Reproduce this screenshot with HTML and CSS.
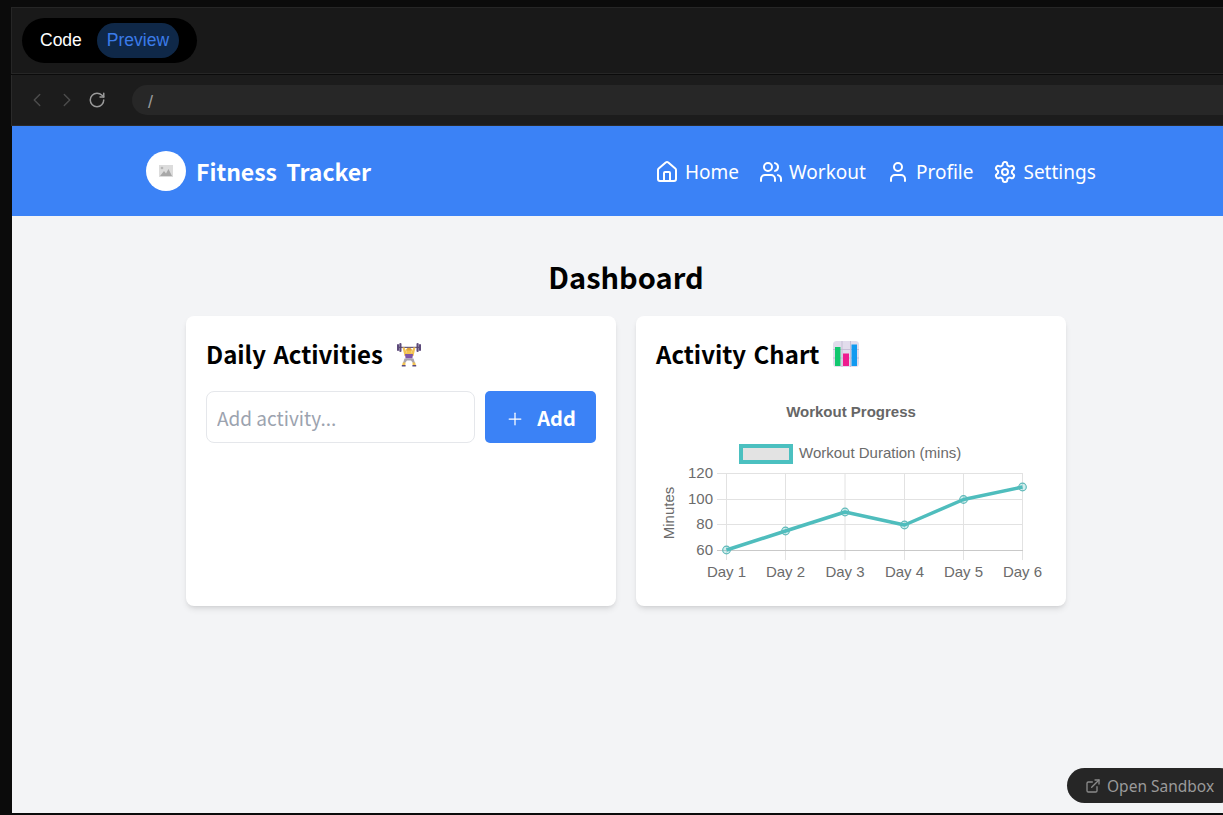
FILE: index.html
```html
<!DOCTYPE html>
<html lang="en">
<head>
<meta charset="utf-8">
<title>Fitness Tracker</title>
<link rel="stylesheet" href="styles.css">
</head>
<body>
<div class="frame">
  <div class="tabbar">
    <div class="toggle">
      <span class="toggle-item">Code</span>
      <span class="toggle-item active">Preview</span>
    </div>
  </div>
  <div class="addressbar">
    <div class="nav-buttons">
      <svg class="ctl dim" viewBox="0 0 24 24"><path d="m15 18-6-6 6-6"/></svg>
      <svg class="ctl dim" viewBox="0 0 24 24"><path d="m9 18 6-6-6-6"/></svg>
      <svg class="ctl reload" viewBox="0 0 24 24"><path d="M21 12a9 9 0 1 1-9-9c2.52 0 4.93 1 6.74 2.74L21 8"/><path d="M21 3v5h-5"/></svg>
    </div>
    <div class="url">/</div>
  </div>
  <div class="preview">
    <header class="site-header">
      <div class="brand">
        <div class="logo">
          <svg viewBox="0 0 14 14" class="logo-img"><rect x="0" y="1" width="14" height="12" fill="#dcdcdc"/><circle cx="3" cy="4" r="1.3" fill="#b5b5b5"/><path d="M1 12l4-5 2 2.5L9.500 5 13 12z" fill="#a8a8a8"/></svg>
        </div>
        <span class="brand-name">Fitness Tracker</span>
      </div>
      <nav class="site-nav">
        <a class="nav-link"><svg class="nav-icon" viewBox="0 0 24 24"><path d="M15 21v-8a1 1 0 0 0-1-1h-4a1 1 0 0 0-1 1v8"/><path d="M3 10a2 2 0 0 1 .709-1.528l7-5.999a2 2 0 0 1 2.582 0l7 5.999A2 2 0 0 1 21 10v9a2 2 0 0 1-2 2H5a2 2 0 0 1-2-2z"/></svg>Home</a>
        <a class="nav-link"><svg class="nav-icon" viewBox="0 0 24 24"><path d="M16 21v-2a4 4 0 0 0-4-4H6a4 4 0 0 0-4 4v2"/><circle cx="9" cy="7" r="4"/><path d="M22 21v-2a4 4 0 0 0-3-3.870"/><path d="M16 3.130a4 4 0 0 1 0 7.750"/></svg>Workout</a>
        <a class="nav-link"><svg class="nav-icon" viewBox="0 0 24 24"><path d="M19 21v-2a4 4 0 0 0-4-4H9a4 4 0 0 0-4 4v2"/><circle cx="12" cy="7" r="4"/></svg>Profile</a>
        <a class="nav-link"><svg class="nav-icon" viewBox="0 0 24 24"><path d="M12.220 2h-.44a2 2 0 0 0-2 2v.18a2 2 0 0 1-1 1.730l-.43.25a2 2 0 0 1-2 0l-.15-.08a2 2 0 0 0-2.730.730l-.22.38a2 2 0 0 0 .73 2.730l.15.1a2 2 0 0 1 1 1.720v.51a2 2 0 0 1-1 1.740l-.15.09a2 2 0 0 0-.73 2.730l.22.38a2 2 0 0 0 2.730.73l.15-.08a2 2 0 0 1 2 0l.43.25a2 2 0 0 1 1 1.730V20a2 2 0 0 0 2 2h.44a2 2 0 0 0 2-2v-.18a2 2 0 0 1 1-1.730l.43-.25a2 2 0 0 1 2 0l.15.08a2 2 0 0 0 2.730-.73l.22-.39a2 2 0 0 0-.73-2.730l-.15-.08a2 2 0 0 1-1-1.740v-.5a2 2 0 0 1 1-1.740l.15-.09a2 2 0 0 0 .73-2.730l-.22-.38a2 2 0 0 0-2.730-.73l-.15.08a2 2 0 0 1-2 0l-.43-.25a2 2 0 0 1-1-1.730V4a2 2 0 0 0-2-2z"/><circle cx="12" cy="12" r="3"/></svg>Settings</a>
      </nav>
    </header>
    <main class="content">
      <h1 class="page-title">Dashboard</h1>
      <div class="cards">
        <section class="card">
          <h2 class="card-title">Daily Activities
            <svg class="emoji lifter" viewBox="0 0 24 26">
              <rect x="0" y="3" width="2" height="7" rx="1" fill="#5c4a7a"/><rect x="22" y="3" width="2" height="7" rx="1" fill="#5c4a7a"/>
              <rect x="2.300" y="2" width="2.200" height="9" rx="1.100" fill="#5c4a7a"/><rect x="19.500" y="2" width="2.200" height="9" rx="1.100" fill="#5c4a7a"/>
              <rect x="2" y="5.800" width="20" height="1.100" fill="#57476f"/>
              <path d="M5.500 6.500l2-.2L9.800 12h4.400l2.300-5.700 2 .2L16.500 15h-9z" fill="#f2c252"/>
              <circle cx="12" cy="10" r="2.800" fill="#f2c252"/><path d="M9.200 9.500a2.800 2.800 0 0 1 5.600 0z" fill="#e0a33a"/>
              <path d="M8 13h8l-.6 4.500H8.600z" fill="#7f56a8"/>
              <path d="M7.500 17.500h9l1.500 4.500h-2l-2-2.500h-4L8 22H6z" fill="#a9a3ae"/>
              <path d="M5.800 21.500h2.800l-.3 2.500H5.200zM15.400 21.500h2.800l.6 2.500h-3.100z" fill="#f2c252"/>
              <path d="M4.800 24h3.800v1.400H4.800zM15.400 24h3.800v1.400h-3.800z" fill="#5c4a7a"/>
            </svg>
          </h2>
          <form class="add-form">
            <input class="add-input" type="text" placeholder="Add activity...">
            <button class="add-button" type="button"><svg class="plus" viewBox="0 0 24 24"><path d="M5 12h14"/><path d="M12 5v14"/></svg>Add</button>
          </form>
        </section>
        <section class="card">
          <h2 class="card-title">Activity Chart
            <svg class="emoji" viewBox="0 0 26 26">
              <rect x="0" y="0" width="26" height="26" rx="3.500" fill="#e2dcec"/>
              <path d="M0 8.500h26M0 17h26M9 0v26M17.500 0v26" stroke="#c6bed6" stroke-width="1"/>
              <rect x="2" y="6" width="5.500" height="19" fill="#12c76f"/>
              <rect x="10" y="12.500" width="6" height="12.500" fill="#ee1c8f"/>
              <rect x="18.500" y="3.500" width="5.500" height="21.500" fill="#129af0"/>
            </svg>
          </h2>
          <svg class="chart" viewBox="656 391 390 195">
            <text class="chart-title" x="851" y="417" text-anchor="middle">Workout Progress</text>
            <rect class="legend-box" x="741" y="446" width="50" height="16"/>
            <text class="chart-label" x="799" y="458">Workout Duration (mins)</text>
            <g class="grid">
              <path d="M717 473.500H1023M717 499.500H1023M717 524.500H1023"/>
              <path d="M726.500 473V560M785.500 473V560M845 473V560M904.500 473V560M963.500 473V560M1022.500 473V560"/>
              <path class="axis" d="M717 550.500H1023"/>
            </g>
            <g class="chart-label" text-anchor="end">
              <text x="713" y="478">120</text>
              <text x="713" y="504">100</text>
              <text x="713" y="529">80</text>
              <text x="713" y="555">60</text>
            </g>
            <g class="chart-label" text-anchor="middle">
              <text x="726.500" y="577">Day 1</text>
              <text x="785.500" y="577">Day 2</text>
              <text x="845" y="577">Day 3</text>
              <text x="904.500" y="577">Day 4</text>
              <text x="963.500" y="577">Day 5</text>
              <text x="1022.500" y="577">Day 6</text>
            </g>
            <text class="chart-label" transform="translate(674 513) rotate(-90)" text-anchor="middle">Minutes</text>
            <polyline class="series" points="726.500,550 785.500,531 845,512 904.500,525 963.500,499.500 1022.500,487"/>
            <g class="points">
              <circle cx="726.500" cy="550" r="3.800"/><circle cx="785.500" cy="531" r="3.800"/><circle cx="845" cy="512" r="3.800"/><circle cx="904.500" cy="525" r="3.800"/><circle cx="963.500" cy="499.500" r="3.800"/><circle cx="1022.500" cy="487" r="3.800"/>
            </g>
          </svg>
        </section>
      </div>
    </main>
  </div>
</div>
<a class="open-sandbox"><svg class="ext" viewBox="0 0 24 24"><path d="M15 3h6v6"/><path d="M10 14 21 3"/><path d="M18 13v6a2 2 0 0 1-2 2H5a2 2 0 0 1-2-2V8a2 2 0 0 1 2-2h6"/></svg>Open Sandbox</a>
</body>
</html>
```
FILE: styles.css
```css
* { box-sizing: border-box; }
html, body { margin: 0; height: 100%; }
body {
  background: #0b0b0b;
  overflow: hidden;
  position: relative;
  font-family: "Noto Sans CJK KR", "Noto Sans", sans-serif;
}
.frame {
  width: 1240px;
  height: 813px;
  margin-left: 11px;
  padding-top: 7px;
  display: flex;
  flex-direction: column;
}
.tabbar {
  height: 67px;
  background: #191919;
  border: 1px solid #262626;
  display: flex;
  align-items: center;
  padding-left: 10px;
  flex: none;
}
.toggle {
  height: 45px;
  width: 175px;
  background: #000;
  border-radius: 23px;
  display: flex;
  align-items: center;
  padding-left: 5px;
  font-family: "Liberation Sans", Arial, sans-serif;
  font-size: 17.500px;
}
.toggle-item {
  color: #fff;
  padding: 0 15px 0 13px;
  height: 35px;
  line-height: 34px;
  border-radius: 18px;
}
.toggle-item.active {
  color: #3b7be8;
  background: #0f2848;
  padding: 0 10px;
  width: 82px;
}
.addressbar {
  height: 51px;
  margin-top: 1px;
  background: #1c1c1c;
  border-bottom: 1px solid #2a2a2a;
  border-left: 1px solid #2a2a2a;
  display: flex;
  align-items: center;
  padding-left: 14px;
  flex: none;
}
.nav-buttons { display: flex; gap: 8px; width: 106px; align-items: center; }
.ctl {
  width: 22px; height: 22px;
  fill: none; stroke: #4d4d4d; stroke-width: 1.500; stroke-linecap: round; stroke-linejoin: round;
}
.ctl.reload {
  width: 18px; height: 18px;
  margin-left: 2px;
  stroke: #9a9a9a; stroke-width: 2;
}
.url {
  flex: 1;
  height: 30px;
  background: #272727;
  border-radius: 15px 0 0 15px;
  color: #9a9a9a;
  font-family: "Liberation Sans", Arial, sans-serif;
  font-size: 18px;
  line-height: 34px;
  padding-left: 16px;
}
.preview {
  flex: 1;
  margin-left: 1px;
  background: #f3f4f6;
  display: flex;
  flex-direction: column;
}
.site-header {
  height: 90px;
  flex: none;
  background: #3b82f6;
  display: flex;
  align-items: center;
  padding-left: 134px;
  color: #fff;
  width: 1228px;
}
.brand { display: flex; align-items: center; gap: 10px; width: 509px; }
.logo {
  width: 40px; height: 40px;
  border-radius: 50%;
  background: #fff;
  display: flex; align-items: center; justify-content: center;
}
.logo-img { width: 14px; height: 14px; }
.brand-name { font-size: 23px; font-weight: 700; word-spacing: 4px; }
.site-nav { display: flex; gap: 20px; padding-top: 2px; }
.nav-link { display: flex; align-items: center; gap: 6px; font-size: 19px; font-family: "Noto Sans", sans-serif; }
.nav-icon {
  width: 24px; height: 24px;
  fill: none; stroke: #fff; stroke-width: 2; stroke-linecap: round; stroke-linejoin: round;
}
.content { padding-top: 38px; }
.page-title {
  margin: 0 0 18px;
  text-align: center;
  font-size: 29px;
  line-height: 44px;
  font-weight: 700;
  color: #000;
  width: 1228px;
}
.cards { display: flex; gap: 20px; width: 880px; margin-left: 174px; }
.card {
  width: 430px;
  height: 290px;
  background: #fff;
  border-radius: 8px;
  box-shadow: 0 4px 6px -1px rgba(0,0,0,.1), 0 2px 4px -2px rgba(0,0,0,.1);
  padding: 20px;
}
.card-title {
  display: flex;
  align-items: center;
  gap: 14px;
  margin: 0 0 19px;
  font-size: 24px;
  line-height: 36px;
  font-weight: 700;
  color: #000;
  word-spacing: 2px;
}
.emoji { width: 26px; height: 26px; flex: none; }
.emoji.lifter { width: 24px; }
.add-form { display: flex; gap: 10px; }
.add-input {
  width: 269px;
  height: 52px;
  border: 1px solid #e5e7eb;
  border-radius: 8px;
  padding: 0 10px;
  font: inherit;
  font-size: 19px;
  outline: none;
  background: #fff;
}
.add-input::placeholder { color: #9ca3af; opacity: 1; }
.add-button {
  width: 111px;
  height: 52px;
  border: 0;
  border-radius: 5px;
  background: #3b82f6;
  color: #fff;
  font: inherit;
  font-size: 20px;
  font-weight: 700;
  display: flex;
  align-items: center;
  justify-content: center;
  gap: 12px;
  padding: 0;
}
.plus {
  width: 20px; height: 20px;
  fill: none; stroke: #fff; stroke-width: 1.500; stroke-linecap: round;
  margin-top: 3px;
}
.chart { display: block; width: 390px; height: 195px; }
.chart-title { font: 700 15px "Liberation Sans", Arial, sans-serif; fill: #666; }
.chart-label { font: 15px "Liberation Sans", Arial, sans-serif; fill: #6b6b6b; }
.legend-box { fill: #e3e3e3; stroke: #4bc0c0; stroke-width: 4; }
.grid path { fill: none; stroke: #e2e2e2; stroke-width: 1; }
.grid path.axis { stroke: #c9c9c9; }
.series { fill: none; stroke: #4fbdbd; stroke-width: 3.500; stroke-linejoin: round; }
.points circle { fill: rgba(75,192,192,.25); stroke: #5fb9b9; stroke-width: 1.200; }
.open-sandbox {
  position: absolute;
  left: 1067px;
  top: 768px;
  width: 170px;
  height: 35px;
  background: #262626;
  border-radius: 18px;
  color: #9a9a9a;
  font-size: 15.500px;
  display: flex;
  align-items: center;
  padding-left: 18px;
  gap: 6px;
  font-family: "Noto Sans", sans-serif;
}
.ext {
  width: 16px; height: 16px;
  fill: none; stroke: #8a8a8a; stroke-width: 2; stroke-linecap: round; stroke-linejoin: round;
}
```
